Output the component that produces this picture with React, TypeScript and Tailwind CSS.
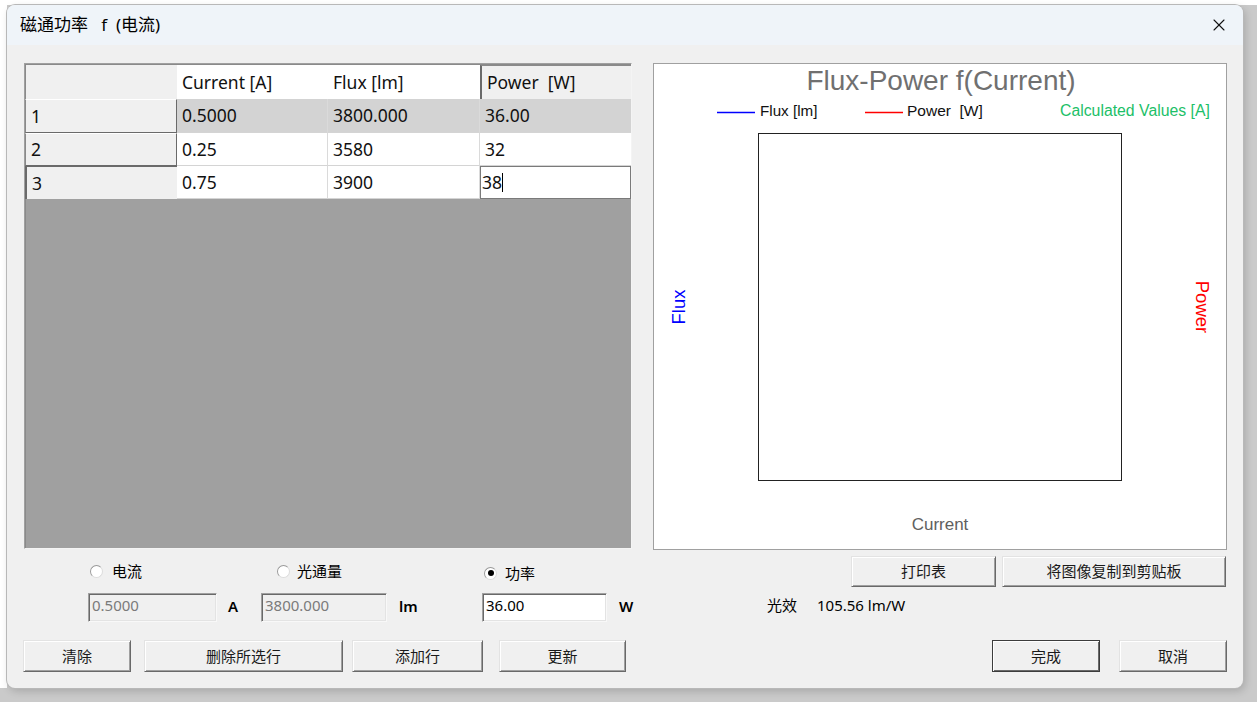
import React from "react";
import { X } from "lucide-react";

const UI = "font-['Noto_Sans','Noto_Sans_CJK_SC',sans-serif]";

function Radio({ checked }: { checked?: boolean }) {
  return (
    <span className="w-[13px] h-[13px] rounded-full border border-[#9a9a9a] border-r-[#dcdcdc] border-b-[#dcdcdc] bg-white flex items-center justify-center shrink-0">
      {checked && <span className="w-[6px] h-[6px] rounded-full bg-black" />}
    </span>
  );
}

function Btn({ children, w, def }: { children: React.ReactNode; w: string; def?: boolean }) {
  return (
    <div
      className={`${w} h-full flex items-center justify-center bg-[#f0f0f0] text-[15px] text-[#1a1a1a] border ${
        def
          ? "border-[#3c3c3c] shadow-[inset_1px_1px_0_#ffffff,inset_-1px_-1px_0_#696969]"
          : "border-[#e3e3e3] border-r-[#696969] border-b-[#696969] shadow-[inset_1px_1px_0_#ffffff,inset_-1px_-1px_0_#a0a0a0]"
      }`}
    >
      {children}
    </div>
  );
}

function Input({ w, value, disabled }: { w: string; value: string; disabled?: boolean }) {
  return (
    <div
      className={`${w} h-[29px] border border-[#a0a0a0] border-r-[#f8f8f8] border-b-[#f8f8f8] shadow-[inset_1px_1px_0_#696969,inset_-1px_-1px_0_#e3e3e3] flex items-start pl-[3px] pt-[1px] text-[15px] leading-[20px] ${
        disabled ? "bg-[#f0f0f0] text-[#7a7a7a]" : "bg-white text-black"
      }`}
    >
      {value}
    </div>
  );
}

const rows = [
  ["1", "0.5000", "3800.000", "36.00"],
  ["2", "0.25", "3580", "32"],
  ["3", "0.75", "3900", "38"],
];

function Grid() {
  return (
    <div className="w-[608px] h-[486px] bg-[#a0a0a0] border border-[#a0a0a0] border-r-[#f4f4f4] border-b-[#f4f4f4] shadow-[inset_1px_1px_0_#8a8a8a] pt-[1px] pl-0 flex flex-col text-[17.5px] text-[#111]">
      <div className="grid grid-cols-[152px_151px_152px_151px] grid-rows-[34px_34px_33px_33px]">
        <div className="bg-[#f0f0f0] border-l border-l-[#8a8a8a]" />
        <div className="bg-white flex items-center pl-[5px]">Current [A]</div>
        <div className="bg-white flex items-center pl-[5px]">Flux [lm]</div>
        <div className="bg-[#f0f0f0] border-l-2 border-t border-l-[#6a6a6a] border-t-[#8a8a8a] flex items-center pl-[5px]">
          Power&nbsp;&nbsp;[W]
        </div>
        {rows.map((r, i) => (
          <React.Fragment key={i}>
            <div
              className={`bg-[#f0f0f0] flex items-center pl-[5px] ${
                i < 2
                  ? "border-l border-l-[#8a8a8a] border-t border-t-white border-r border-r-[#6a6a6a] border-b border-b-[#6a6a6a]"
                  : "border-l-2 border-l-[#6a6a6a] border-t border-t-[#6a6a6a]"
              }`}
            >
              {r[0]}
            </div>
            {r.slice(1).map((c, j) => {
              const editing = i === 2 && j === 2;
              if (editing) {
                return (
                  <div key={j} className="bg-white border border-[#7a7a7a] flex items-center pl-[1px]">
                    <span>{c}</span>
                    <span className="w-[1px] h-[19px] bg-black" />
                  </div>
                );
              }
              return (
                <div
                  key={j}
                  className={`${i === 0 ? "bg-[#d3d3d3]" : "bg-white"} flex items-center pl-[5px] ${
                    j < 2 ? "border-r border-r-[#dadada]" : ""
                  } border-b border-b-[#d4d4d4]`}
                >
                  {c}
                </div>
              );
            })}
          </React.Fragment>
        ))}
      </div>
      <div className="flex-1" />
    </div>
  );
}

function Chart() {
  const arial = "'Liberation Sans', Arial, sans-serif";
  return (
    <div className="w-[574px] h-[487px] bg-white border border-[#a0a0a0]">
      <svg width="572" height="485" viewBox="0 0 572 485" fontFamily={arial}>
        <text x="287" y="26" textAnchor="middle" fontSize="28" fill="#707070">
          Flux-Power f(Current)
        </text>
        <line x1="63" y1="48.5" x2="101" y2="48.5" stroke="#0000ff" strokeWidth="1.6" />
        <text x="106" y="52" fontSize="15.2" fill="#111">Flux [lm]</text>
        <line x1="211" y1="48.5" x2="249" y2="48.5" stroke="#ff0000" strokeWidth="1.6" />
        <text x="253" y="52" fontSize="15.5" fill="#111" xmlSpace="preserve">Power  [W]</text>
        <text x="406" y="52" fontSize="15.8" fill="#1cc068">Calculated Values [A]</text>
        <rect x="104.5" y="69.5" width="363" height="347" fill="white" stroke="#222" strokeWidth="1" />
        <text
          x="24"
          y="243"
          fontSize="18.5"
          fill="#0000ff"
          textAnchor="middle"
          dominantBaseline="central"
          transform="rotate(-90 24 243)"
        >
          Flux
        </text>
        <text
          x="548"
          y="243"
          fontSize="18.5"
          fill="#ff0000"
          textAnchor="middle"
          dominantBaseline="central"
          transform="rotate(90 548 243)"
        >
          Power
        </text>
        <text x="286" y="466" fontSize="17" fill="#606060" textAnchor="middle">
          Current
        </text>
      </svg>
    </div>
  );
}

export default function App() {
  return (
    <div className={`w-[1257px] h-[702px] bg-[#cacaca] flex flex-col overflow-hidden ${UI}`}>
      <div className="h-[5px] bg-white shrink-0" />
      <div className="flex flex-row">
        <div className="w-[7px] h-[683px] bg-white shrink-0" />
        <div className="w-[1236px] h-[683px] rounded-[8px] overflow-hidden bg-[#f0f0f0] shadow-[0_0_0_1px_#b8b8b8,2px_3px_8px_rgba(0,0,0,0.18)] flex flex-col shrink-0">
          {/* title bar */}
          <div className="h-[40px] bg-[#eff4f9] flex items-center pl-[13px] pr-[14px] shrink-0">
            <span className="text-[17px] text-black whitespace-pre">磁通功率   f  (电流)</span>
            <div className="flex-1" />
            <X size={20} strokeWidth={1.3} className="text-[#111]" />
          </div>
          {/* main row */}
          <div className="flex flex-row pt-[18px] pl-[17px] gap-[21px]">
            <Grid />
            <Chart />
          </div>
          {/* middle row */}
          <div className="h-[90px] flex flex-row">
            <div className="w-[646px] pl-[81px] pt-[12px] flex flex-row text-[15px] text-black">
              <div className="w-[173px] flex flex-col">
                <div className="h-[18px] flex items-center pl-[2px] gap-[9px]">
                  <Radio />
                  <span>电流</span>
                </div>
                <div className="mt-[13px] flex items-center gap-[11px]">
                  <Input w="w-[129px]" value="0.5000" disabled />
                  <span className="font-semibold text-[15px] -mt-[3px]">A</span>
                </div>
              </div>
              <div className="w-[221px] flex flex-col">
                <div className="h-[18px] flex items-center pl-[16px] gap-[7px]">
                  <Radio />
                  <span>光通量</span>
                </div>
                <div className="mt-[13px] flex items-center gap-[12px]">
                  <Input w="w-[126px]" value="3800.000" disabled />
                  <span className="font-semibold text-[15px] -mt-[3px]">lm</span>
                </div>
              </div>
              <div className="flex-1 flex flex-col">
                <div className="h-[18px] flex items-center pl-[2px] gap-[8px] mt-[2px]">
                  <Radio checked />
                  <span>功率</span>
                </div>
                <div className="mt-[11px] flex items-center gap-[12px]">
                  <Input w="w-[125px]" value="36.00" />
                  <span className="font-semibold text-[15px] -mt-[3px]">W</span>
                </div>
              </div>
            </div>
            <div className="flex-1 flex flex-col pt-[6px]">
              <div className="h-[31px] flex flex-row pl-[198px] gap-[6px]">
                <Btn w="w-[145px]">打印表</Btn>
                <Btn w="w-[224px]">将图像复制到剪贴板</Btn>
              </div>
              <div className="mt-[8px] h-[20px] flex items-center pl-[114px] gap-[20px] text-[15px] text-black">
                <span>光效</span>
                <span>105.56 lm/W</span>
              </div>
            </div>
          </div>
          {/* bottom buttons */}
          <div className="h-[32px] flex flex-row pl-[16px] pr-[16px] shrink-0">
            <Btn w="w-[108px]">清除</Btn>
            <div className="w-[13px]" />
            <Btn w="w-[199px]">删除所选行</Btn>
            <div className="w-[9px]" />
            <Btn w="w-[131px]">添加行</Btn>
            <div className="w-[16px]" />
            <Btn w="w-[127px]">更新</Btn>
            <div className="flex-1" />
            <Btn w="w-[108px]" def>
              完成
            </Btn>
            <div className="w-[19px]" />
            <Btn w="w-[108px]">取消</Btn>
          </div>
        </div>
      </div>
    </div>
  );
}
